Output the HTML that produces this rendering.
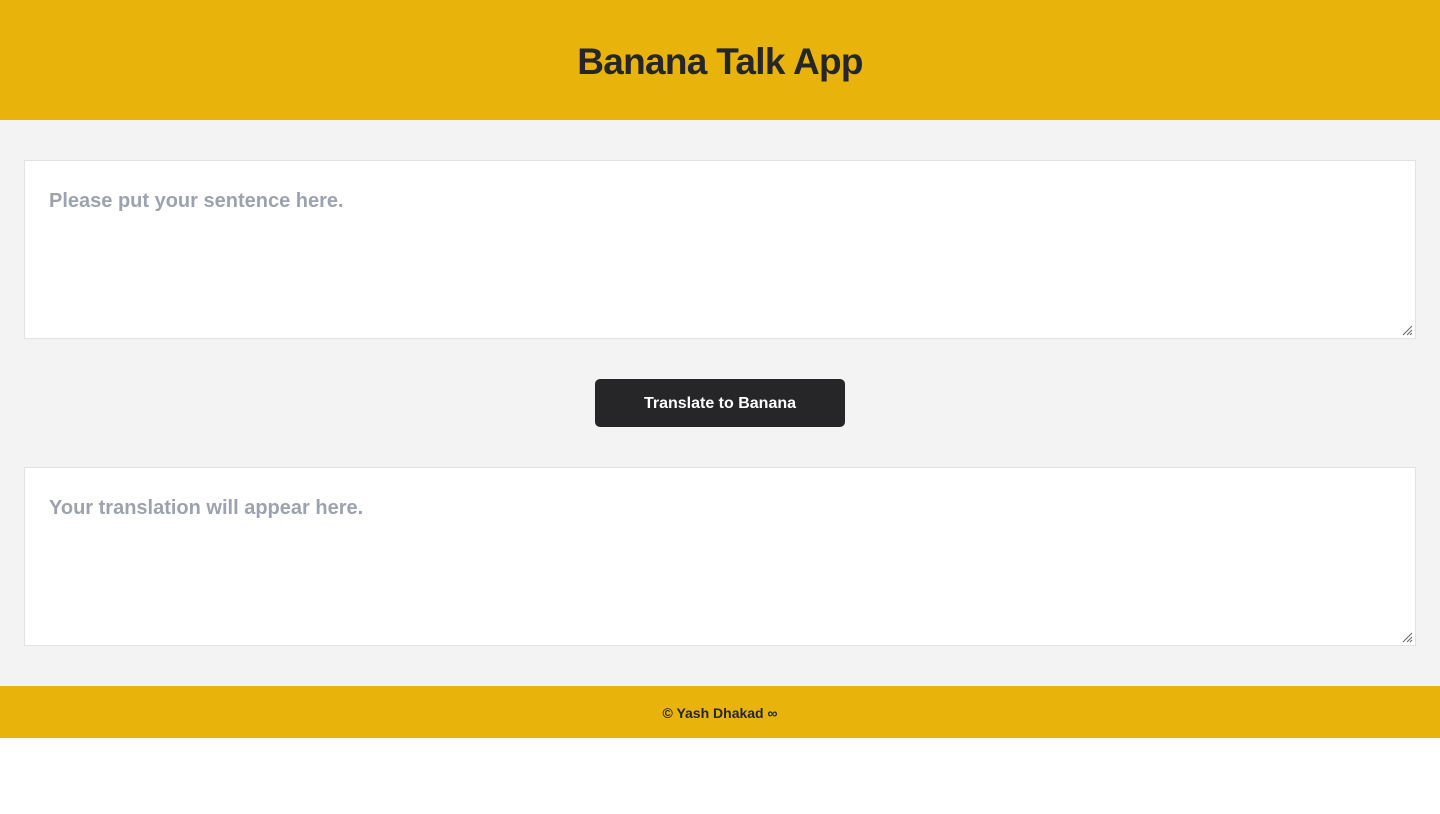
<!DOCTYPE html>
<html><head><meta charset="utf-8"><style>
*{box-sizing:border-box;margin:0;padding:0}
body{width:1440px;height:814px;background:#fff;font-family:"Liberation Sans",sans-serif}
header{height:120px;background:#e8b30a;text-align:center;color:#262629;font-size:37px;font-weight:bold;line-height:123px;letter-spacing:-0.7px}
main{background:#f3f3f3;height:566px;padding:40px 24px}
.ta{height:179px;background:#fff;border:1px solid #e2e2e2;padding:29px 24px;font-size:20px;font-weight:bold;color:#9ca3af;position:relative}
.ta svg{position:absolute;right:2px;bottom:2px}
.btn{width:250px;height:48px;margin:40px auto;background:#262629;border-radius:5px;color:#fff;font-weight:bold;font-size:16px;text-align:center;line-height:50px}
footer{height:52px;background:#e8b30a;text-align:center;line-height:54px;font-size:14px;font-weight:bold;color:#262629}
</style></head><body>
<header>Banana Talk App</header>
<main>
<div class="ta">Please put your sentence here.<svg width="12" height="12"><path d="M11 2L2 11M11 6L6 11M11 9L9 11" stroke="#666" stroke-width="1"/></svg></div>
<div class="btn">Translate to Banana</div>
<div class="ta">Your translation will appear here.<svg width="12" height="12"><path d="M11 2L2 11M11 6L6 11M11 9L9 11" stroke="#666" stroke-width="1"/></svg></div>
</main>
<footer>© Yash Dhakad ∞</footer>
</body></html>
